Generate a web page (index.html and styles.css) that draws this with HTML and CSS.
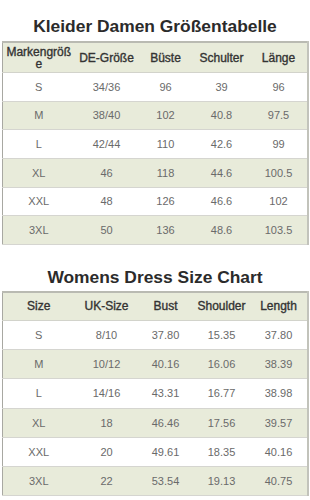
FILE: index.html
```html
<!DOCTYPE html>
<html lang="de">
<head>
<meta charset="utf-8">
<link rel="stylesheet" href="styles.css">
</head>
<body>
<div class="page">
  <section class="chart chart-de">
    <h1 class="title">Kleider Damen Größentabelle</h1>
    <table class="sizes">
      <colgroup><col class="c1"><col class="c2"><col class="c3"><col class="c4"><col class="c5"></colgroup>
      <thead>
        <tr><th class="brand">Markengröße</th><th>DE-Größe</th><th>Büste</th><th>Schulter</th><th>Länge</th></tr>
      </thead>
      <tbody>
        <tr><td>S</td><td>34/36</td><td>96</td><td>39</td><td>96</td></tr>
        <tr><td>M</td><td>38/40</td><td>102</td><td>40.8</td><td>97.5</td></tr>
        <tr><td>L</td><td>42/44</td><td>110</td><td>42.6</td><td>99</td></tr>
        <tr><td>XL</td><td>46</td><td>118</td><td>44.6</td><td>100.5</td></tr>
        <tr><td>XXL</td><td>48</td><td>126</td><td>46.6</td><td>102</td></tr>
        <tr><td>3XL</td><td>50</td><td>136</td><td>48.6</td><td>103.5</td></tr>
      </tbody>
    </table>
  </section>
  <section class="chart chart-uk">
    <h1 class="title">Womens Dress Size Chart</h1>
    <table class="sizes">
      <colgroup><col class="c1"><col class="c2"><col class="c3"><col class="c4"><col class="c5"></colgroup>
      <thead>
        <tr><th>Size</th><th>UK-Size</th><th>Bust</th><th>Shoulder</th><th>Length</th></tr>
      </thead>
      <tbody>
        <tr><td>S</td><td>8/10</td><td>37.80</td><td>15.35</td><td>37.80</td></tr>
        <tr><td>M</td><td>10/12</td><td>40.16</td><td>16.06</td><td>38.39</td></tr>
        <tr><td>L</td><td>14/16</td><td>43.31</td><td>16.77</td><td>38.98</td></tr>
        <tr><td>XL</td><td>18</td><td>46.46</td><td>17.56</td><td>39.57</td></tr>
        <tr><td>XXL</td><td>20</td><td>49.61</td><td>18.35</td><td>40.16</td></tr>
        <tr><td>3XL</td><td>22</td><td>53.54</td><td>19.13</td><td>40.75</td></tr>
      </tbody>
    </table>
  </section>
</div>
</body>
</html>
```

FILE: styles.css
```css
html, body {
  margin: 0;
  padding: 0;
  background: #ffffff;
}

body {
  font-family: "Liberation Sans", Arial, sans-serif;
  color: #222;
}

.page {
  width: 310px;
  padding: 16px 0 0 2px;
  box-sizing: border-box;
}

.title {
  margin: 0 0 5px 0;
  font-size: 17.4px;
  line-height: 20px;
  font-weight: bold;
  text-align: center;
  color: #2b2b2b;
  padding-right: 2px;
}

.chart-uk {
  margin-top: 22px;
}

.chart-uk .title {
  margin-bottom: 4px;
}

.sizes {
  width: 305px;
  table-layout: fixed;
  border-collapse: collapse;
  border-top: 2px solid #b9bab2;
  border-right: 2px solid #c2c3bb;
  border-left: 1px solid #a8a8a2;
  border-bottom: 1px solid #a8a8a2;
}

.c1 { width: 72px; }
.c2 { width: 64px; }
.c3 { width: 54px; }
.c4 { width: 58px; }
.c5 { width: 57px; }

.sizes th,
.sizes td {
  padding: 0 2px;
  text-align: center;
  vertical-align: middle;
}

.sizes th {
  background: #e8ebda;
  font-size: 12px;
  font-weight: normal;
  -webkit-text-stroke: 0.35px #333;
  line-height: 12px;
  color: #333;
  border-bottom: 1px solid #d2d3cb;
}

.sizes th.brand {
  word-break: break-all;
}

.sizes td {
  font-size: 11px;
  color: #6a6a6a;
  border-bottom: 1px solid #d5d5d0;
}

.sizes tbody tr:nth-child(even) td {
  background: #e8ebda;
}

.chart-de th { height: 29px; }
.chart-de td { height: 27.67px; }

.chart-uk th { height: 27px; }
.chart-uk td { height: 28.2px; }
```
